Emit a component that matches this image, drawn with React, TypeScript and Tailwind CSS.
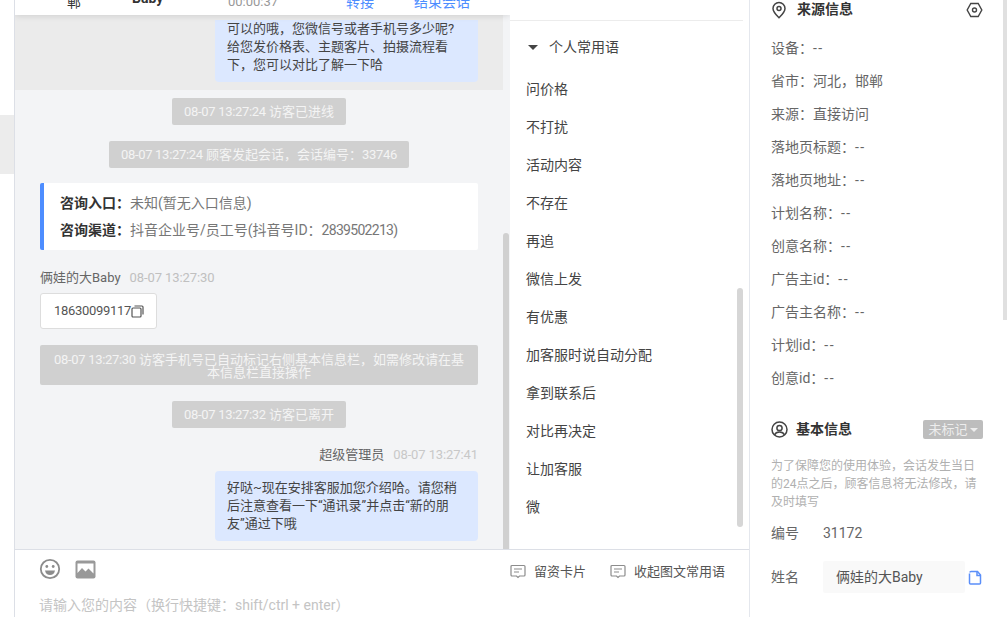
const font = "font-['Roboto','Noto_Sans_CJK_SC',sans-serif]";

const phrases = ["问价格", "不打扰", "活动内容", "不存在", "再追", "微信上发", "有优惠", "加客服时说自动分配", "拿到联系后", "对比再决定", "让加客服", "微"];

const sourceRows = [
  "设备：--",
  "省市：河北，邯郸",
  "来源：直接访问",
  "落地页标题：--",
  "落地页地址：--",
  "计划名称：--",
  "创意名称：--",
  "广告主id：--",
  "广告主名称：--",
  "计划id：--",
  "创意id：--",
];

function Num({ children }: { children: React.ReactNode }) {
  return <span className="tracking-[-0.3px]">{children}</span>;
}

function SystemMessage({ children, wide }: { children: React.ReactNode; wide?: boolean }) {
  return (
    <div
      className={
        wide
          ? "w-full rounded-[2px] bg-[#d0d0d0] px-[13px] pt-[8px] pb-[6px] text-center text-[13px] leading-[13px] text-[#f4f4f4]"
          : "rounded-[2px] bg-[#d0d0d0] px-[12px] text-[13px] leading-[27px] text-[#f4f4f4]"
      }
    >
      {children}
    </div>
  );
}

function NoteIcon() {
  return (
    <svg width="16" height="15" viewBox="0 0 16 15" fill="none" stroke="#8c8c8c" strokeWidth="1.2">
      <path d="M2 1.500h12a1 1 0 0 1 1 1v8.500a1 1 0 0 1-1 1H9.500L8 13.500 6.500 12H2a1 1 0 0 1-1-1V2.500a1 1 0 0 1 1-1z" />
      <path d="M4 5h8M4 8h5" />
    </svg>
  );
}

export default function App() {
  return (
    <div className={`${font} flex h-[617px] w-[1007px] overflow-hidden bg-white text-[14px] text-[#333]`}>
      {/* far left strip */}
      <div className="flex w-[15px] shrink-0 flex-col border-r border-[#dcdfe6] pt-[115px]">
        <div className="h-[59px] bg-[#ececec]" />
      </div>

      {/* chat + phrases */}
      <div className="flex w-[735px] shrink-0 flex-col border-r border-[#e4e7ed]">
        <div className="flex h-[550px] border-b border-[#dcdfe6]">
          {/* chat */}
          <div className="flex w-[495px] shrink-0 flex-col overflow-hidden bg-[#f3f4f6]">
            <div className="z-10 flex h-[15px] shrink-0 items-end overflow-hidden bg-white pl-[52px] text-[14px] leading-[20px] shadow-[0_1px_6px_rgba(0,0,0,0.12)]">
              <span className="w-[65px] -translate-y-[3px] text-[#333]">郸</span>
              <span className="w-[96px] -translate-y-[7px] font-bold text-[#333]">Baby</span>
              <span className="w-[118px] -translate-y-[3px] text-[13px] text-[#999]">00:00:37</span>
              <span className="w-[68px] -translate-y-[3px] text-[#4d8dff]">转接</span>
              <span className="-translate-y-[3px] text-[#4d8dff]">结束会话</span>
            </div>
            <div className="flex min-h-0 flex-1">
              <div className="flex w-[488px] shrink-0 flex-col items-center">
                <div className="flex h-[75px] w-full shrink-0 items-end justify-end bg-[#ebebeb] pr-[25px] pb-[8px]">
                  <div className="w-[263px] rounded-b-[4px] bg-[#dce8ff] px-[12px] pb-[8px] text-[13px] leading-[18px] text-[#444]">
                    可以的哦，您微信号或者手机号多少呢?给您发价格表、主题客片、拍摄流程看下，您可以对比了解一下哈
                  </div>
                </div>
                <div className="flex w-full flex-col items-center px-[25px] pt-[8px]">
                  <SystemMessage><Num>08-07 13:27:24</Num> 访客已进线</SystemMessage>
                  <div className="h-[16px]" />
                  <SystemMessage><Num>08-07 13:27:24</Num> 顾客发起会话，会话编号：<Num>33746</Num></SystemMessage>
                  <div className="mt-[15px] w-full rounded-[2px] border-l-4 border-[#4d8dff] bg-white pt-[7px] pb-[6px] pl-[16px] text-[14px] leading-[27px]">
                    <div><span className="font-bold text-[#333]">咨询入口：</span><span className="text-[#777]">未知(暂无入口信息)</span></div>
                    <div><span className="font-bold text-[#333]">咨询渠道：</span><span className="text-[#777]">抖音企业号/员工号(抖音号ID：<span className="tracking-[-0.7px]">2839502213</span>)</span></div>
                  </div>
                  <div className="mt-[19px] flex w-full gap-[9px] text-[13px] leading-[18px]">
                    <span className="text-[#666]">俩娃的大Baby</span>
                    <span className="tracking-[-0.1px] text-[#c0c0c0]">08-07 13:27:30</span>
                  </div>
                  <div className="mt-[6px] flex h-[36px] w-[117px] items-center self-start rounded-[3px] border border-[#ddd] bg-white pl-[13px] text-[13px] text-[#555]">
                    <Num>18630099117</Num>
                    <svg width="13" height="13" viewBox="0 0 13 13" fill="none" stroke="#555" strokeWidth="1.200">
                      <rect x="1" y="3" width="9" height="9" rx="1" />
                      <path d="M3.500 1h7.500a1 1 0 0 1 1 1v7.500" />
                    </svg>
                  </div>
                  <div className="mt-[16px] w-full">
                    <SystemMessage wide><Num>08-07 13:27:30</Num> 访客手机号已自动标记右侧基本信息栏，如需修改请在基本信息栏直接操作</SystemMessage>
                  </div>
                  <div className="h-[16px]" />
                  <SystemMessage><Num>08-07 13:27:32</Num> 访客已离开</SystemMessage>
                  <div className="mt-[18px] flex w-full justify-end gap-[9px] text-[13px] leading-[18px]">
                    <span className="text-[#666]">超级管理员</span>
                    <span className="tracking-[-0.1px] text-[#c8c8c8]">08-07 13:27:41</span>
                  </div>
                  <div className="mt-[7px] w-[263px] self-end rounded-[4px] bg-[#dce8ff] px-[12px] py-[8px] text-[13px] leading-[18px] text-[#444]">
                    好哒~现在安排客服加您介绍哈。请您稍后注意查看一下“通讯录”并点击“新的朋友”通过下哦
                  </div>
                </div>
              </div>
              <div className="w-[6px] shrink-0 pt-[218px]">
                <div className="h-full rounded-t-[3px] bg-[#d0d0d0]" />
              </div>
            </div>
          </div>

          {/* phrases */}
          <div className="flex min-w-0 flex-1 flex-col">
            <div className="h-[21px] w-[233px] shrink-0 border-b border-[#ececec]" />
            <div className="flex">
              <div className="w-[227px] shrink-0">
                <div className="flex h-[53px] items-center gap-[11px] pl-[18px] text-[14px] text-[#444]">
                  <span className="h-0 w-0 border-x-[5px] border-t-[5px] border-x-transparent border-t-[#444]" />
                  个人常用语
                </div>
                <ul className="pl-[16px] text-[14px] text-[#444]">
                  {phrases.map((p) => (
                    <li key={p} className="h-[38px] leading-[30px]">{p}</li>
                  ))}
                </ul>
              </div>
              <div className="w-[6px] pt-[267px]">
                <div className="h-[239px] rounded-[3px] bg-[#d6d6d6]" />
              </div>
            </div>
          </div>
        </div>

        {/* input */}
        <div className="flex min-h-0 flex-1 flex-col pl-[24px] pr-[24px]">
          <div className="flex items-start justify-between pt-[8px]">
            <div className="flex items-center gap-[14px]">
              <svg width="22" height="22" viewBox="0 0 22 22" fill="none">
                <circle cx="11" cy="11" r="9.200" stroke="#8c8c8c" strokeWidth="1.800" />
                <circle cx="7.800" cy="8.500" r="1.400" fill="#8c8c8c" />
                <circle cx="14.200" cy="8.500" r="1.400" fill="#8c8c8c" />
                <path d="M6 12.500h10c-.5 3-2.500 4.500-5 4.500s-4.500-1.500-5-4.500z" fill="#8c8c8c" />
              </svg>
              <svg width="21" height="19" viewBox="0 0 21 19">
                <rect x="0.500" y="0.500" width="20" height="18" rx="2" fill="#999" />
                <path d="M2.500 13l4.500-5 3.500 3.500 3-3 5 5v-10h-16z" fill="#fff" />
              </svg>
            </div>
            <div className="flex items-center pt-[4px] text-[13px] text-[#555]">
              <NoteIcon />
              <span className="ml-[8px]">留资卡片</span>
              <span className="ml-[24px]"><NoteIcon /></span>
              <span className="ml-[8px]">收起图文常用语</span>
            </div>
          </div>
          <div className="mt-[14px] text-[14px] leading-[18px] text-[#c4c4c4]">
            请输入您的内容（换行快捷键：shift/ctrl + enter）
          </div>
        </div>
      </div>

      {/* right info */}
      <div className="flex min-w-0 flex-1">
        <div className="w-[253px] shrink-0 pl-[21px] pr-[20px] text-[14px] text-[#666]">
          <div className="flex h-[19px] items-center justify-between">
            <div className="flex items-center gap-[10px] font-bold text-[#333]">
              <svg width="16" height="18" viewBox="0 0 16 18" fill="none" stroke="#444" strokeWidth="1.500">
                <path d="M8 16.800C5 13.800 2 11 2 7.500a6 6 0 0 1 12 0c0 3.500-3 6.300-6 9.300z" />
                <circle cx="8" cy="7.500" r="2" />
              </svg>
              来源信息
            </div>
            <svg width="17" height="16" viewBox="0 0 17 16" fill="none" stroke="#444" strokeWidth="1.400">
              <path d="M4.800 1.500h7.400l3.600 6.500-3.600 6.500H4.800L1.200 8z" />
              <circle cx="8.500" cy="8" r="2" />
            </svg>
          </div>
          <div className="mt-[13px]">
            {sourceRows.map((r) => (
              <div key={r} className="h-[33px] leading-[33px]">
                {r.endsWith("--") ? (
                  <>
                    {r.slice(0, -2)}
                    <span className="tracking-[1.5px]">--</span>
                  </>
                ) : (
                  r
                )}
              </div>
            ))}
          </div>
          <div className="mt-[25px] flex h-[19px] items-center justify-between">
            <div className="flex items-center gap-[8px] font-bold text-[#333]">
              <svg width="17" height="17" viewBox="0 0 17 17" fill="none" stroke="#444" strokeWidth="1.500">
                <circle cx="8.500" cy="8.500" r="7.500" />
                <circle cx="8.500" cy="7" r="2.600" />
                <path d="M3.500 14c1-2.500 3-3 5-3s4 .5 5 3" />
              </svg>
              基本信息
            </div>
            <div className="flex h-[19px] w-[60px] items-center justify-center gap-[2px] rounded-[2px] bg-[#bdbdbd] text-[13px] text-[#ededed]">
              未标记
              <span className="h-0 w-0 border-x-[4px] border-t-[4px] border-x-transparent border-t-[#ededed]" />
            </div>
          </div>
          <p className="mt-[18px] text-[12px] leading-[18px] text-[#b0b0b0]">
            为了保障您的使用体验，会话发生当日的24点之后，顾客信息将无法修改，请及时填写
          </p>
          <div className="mt-[4px] flex h-[36px] items-center">
            <span className="w-[52px]">编号</span>
            <span>31172</span>
          </div>
          <div className="mt-[10px] flex items-center">
            <span className="w-[52px]">姓名</span>
            <div className="h-[32px] w-[142px] rounded-[2px] bg-[#f9f9f9] pl-[13px] leading-[32px] text-[#555]">俩娃的大Baby</div>
            <svg className="ml-[3px]" width="14" height="15" viewBox="0 0 14 15" fill="none" stroke="#5b8ff9" strokeWidth="1.500">
              <path d="M1.500 3.500v9.500a1 1 0 0 0 1 1h9a1 1 0 0 0 1-1V5L9.500 1.500H3a1 1 0 0 0-1 1" />
              <path d="M9 2v3.500h3.500" />
            </svg>
          </div>
        </div>
        <div className="w-[4px] shrink-0">
          <div className="h-[320px] bg-[#e0e0e0]" />
        </div>
      </div>
    </div>
  );
}
